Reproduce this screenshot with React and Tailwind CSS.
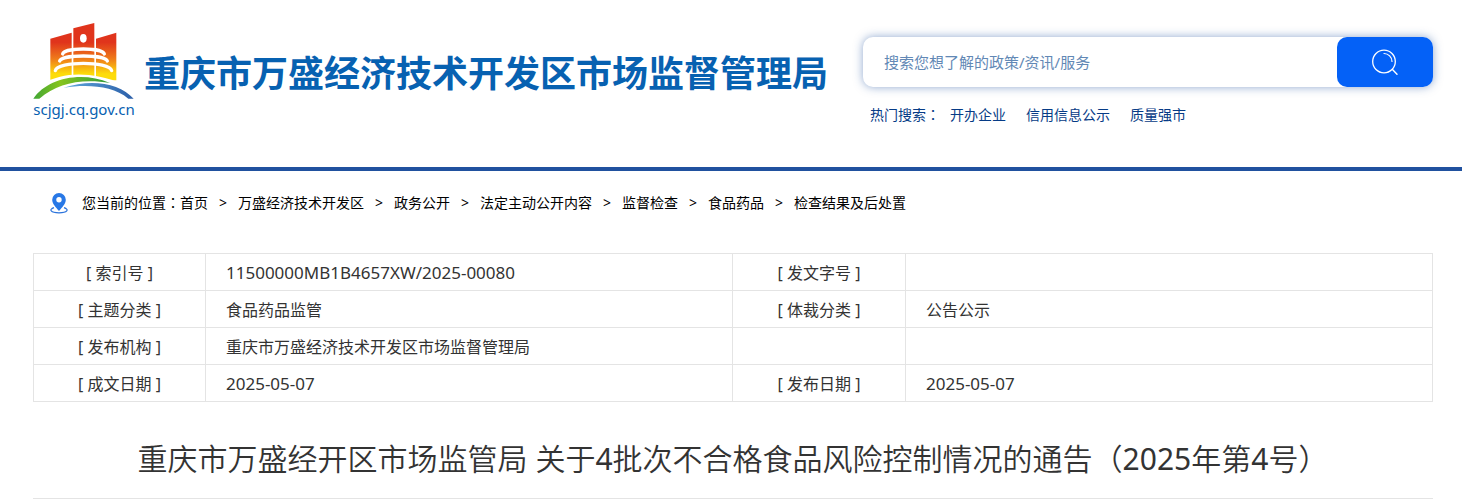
const HOT_WORDS = ['开办企业', '信用信息公示', '质量强市'];

const CRUMBS = ['首页', '万盛经济技术开发区', '政务公开', '法定主动公开内容', '监督检查', '食品药品', '检查结果及后处置'];

const ROWS = [
  ['[ 索引号 ]', '11500000MB1B4657XW/2025-00080', '[ 发文字号 ]', ''],
  ['[ 主题分类 ]', '食品药品监管', '[ 体裁分类 ]', '公告公示'],
  ['[ 发布机构 ]', '重庆市万盛经济技术开发区市场监督管理局', '', ''],
  ['[ 成文日期 ]', '2025-05-07', '[ 发布日期 ]', '2025-05-07'],
];

function LogoMark() {
  return (
    <svg viewBox="24 24 306 231" className="h-[77px] w-[102px]" aria-hidden="true">
      <defs>
        <linearGradient id="tower" x1="0" y1="24" x2="0" y2="190" gradientUnits="userSpaceOnUse">
          <stop offset="0.35" stopColor="#e0341c" />
          <stop offset="0.65" stopColor="#ef7c1a" />
          <stop offset="0.92" stopColor="#fddc0a" />
        </linearGradient>
        <linearGradient id="hill" x1="24" y1="0" x2="255" y2="0" gradientUnits="userSpaceOnUse">
          <stop offset="0" stopColor="#3fa535" />
          <stop offset="0.35" stopColor="#86c41e" />
          <stop offset="1" stopColor="#2f9a3c" />
        </linearGradient>
        <linearGradient id="river" x1="120" y1="0" x2="326" y2="0" gradientUnits="userSpaceOnUse">
          <stop offset="0" stopColor="#5fa8dc" />
          <stop offset="1" stopColor="#2b5ea8" />
        </linearGradient>
      </defs>
      <g fill="url(#tower)">
        <path d="M76 71 L140 53 V196 H76 Z" />
        <path d="M145 40 L208 24 V196 H145 Z" />
        <path d="M213 71 L274 53 V196 H213 Z" />
      </g>
      <ellipse cx="175" cy="70" rx="10" ry="13" fill="#fff" />
      <g fill="none" stroke="#fff" strokeWidth="10" strokeLinecap="round">
        <path d="M113 117 C118 97 232 97 238 117" />
        <path d="M104 138 C110 118 240 118 247 138" />
        <path d="M91 167 C98 138 252 138 260 167" />
      </g>
      {/* white band keeps the hill clear of the towers */}
      <path d="M60 204 C110 172 200 168 290 206 L290 226 L60 226 Z" fill="#fff" />
      <path d="M25 251 C65 192 165 166 255 204 C165 190 98 206 43 251 Z" fill="url(#hill)" />
      <path d="M116 218 C200 190 285 205 326 251 H310 C262 212 190 208 116 218 Z" fill="url(#river)" />
    </svg>
  );
}

function SearchIcon() {
  return (
    <svg viewBox="0 0 26 26" className="size-[26px]" fill="none" stroke="#fff" strokeLinecap="round" aria-hidden="true">
      <circle cx="12" cy="12.5" r="11.3" strokeWidth="1.3" />
      <path d="M12 4.5 a8 8 0 0 1 8 8" strokeWidth="1.2" />
      <path d="M20.5 20.5 L25 25.2" strokeWidth="1.4" />
    </svg>
  );
}

function PinIcon() {
  return (
    <svg viewBox="0 0 18 21" className="h-[21px] w-[18px]" aria-hidden="true">
      <path d="M4 14.6 C-1.6 16.6 0.6 19.8 9 19.8 C17.4 19.8 19.6 16.6 14 14.6" fill="none" stroke="#2b73dc" strokeWidth="1.2" />
      <path d="M9 0 a6.8 6.8 0 0 1 6.8 6.8 C15.8 11 12 14.5 9 18 C6 14.5 2.2 11 2.2 6.8 A6.8 6.8 0 0 1 9 0 Z" fill="#2878e6" />
      <circle cx="9" cy="6.7" r="2.7" fill="#fff" />
    </svg>
  );
}

// the TC cut centres the full-width colon in its box
function Colon() {
  return <span lang="zh-TW" className="font-['Noto_Sans_CJK_TC',sans-serif] leading-none">：</span>;
}

function Header() {
  return (
    <header className="border-b-4 border-[#20519f] pr-[29px] pl-[33px]">
      <div className="flex h-[167px] items-start justify-between">
        <a href="#" className="flex text-[#0761b1]">
          <span className="mt-[23px] flex w-[102px] flex-col">
            <LogoMark />
            <span className="text-center text-[15px] leading-[18px]">scjgj.cq.gov.cn</span>
          </span>
          <span className="mt-12 ml-[9px] text-4xl leading-[52px] font-bold whitespace-nowrap">
            重庆市万盛经济技术开发区市场监督管理局
          </span>
        </a>
        <div className="mt-[37px] w-[570px]">
          <form className="flex h-[50px] rounded-[10px] bg-white shadow-[0_0_10px_#20519f80]">
            <input
              type="text"
              aria-label="搜索"
              placeholder="搜索您想了解的政策/资讯/服务"
              className="min-w-0 flex-1 pl-[21px] text-[15px] outline-none placeholder:text-[#6288b5]"
            />
            <button type="button" aria-label="搜索" className="flex w-24 items-center justify-center rounded-[10px] bg-[#0461f7]">
              <SearchIcon />
            </button>
          </form>
          <p className="mt-[18px] flex pl-[7px] text-sm text-[#063b86]">
            <span className="w-20">热门搜索<Colon /></span>
            <span className="flex gap-5">
              {HOT_WORDS.map((w) => (
                <a key={w} href="#">{w}</a>
              ))}
            </span>
          </p>
        </div>
      </div>
    </header>
  );
}

function Breadcrumb() {
  return (
    <nav aria-label="当前位置" className="flex h-16 items-center pl-[17px] text-sm text-black">
      <PinIcon />
      <span className="ml-3.5">您当前的位置<Colon /></span>
      <ol className="flex">
        {CRUMBS.map((c, i) => (
          <li key={c} className="flex">
            {i > 0 && <span className="w-[30px] text-center">&gt;</span>}
            <a href="#">{c}</a>
          </li>
        ))}
      </ol>
    </nav>
  );
}

function InfoTable() {
  return (
    <table className="mt-[18px] w-full table-fixed border-collapse text-base text-[#333]">
      <colgroup>
        <col className="w-[172px]" />
        <col />
        <col className="w-[173px]" />
        <col />
      </colgroup>
      <tbody>
        {ROWS.map((row) => (
          <tr key={row[0]} className="h-[37px]">
            {row.map((cell, i) =>
              i % 2 === 0 ? (
                <th key={i} scope="row" className="border border-[#e4e4e4] pt-0.5 font-normal">{cell}</th>
              ) : (
                <td key={i} className={`border border-[#e4e4e4] pt-0.5 pl-5 ${/^\d/.test(cell) ? 'text-[17px]' : ''}`}>{cell}</td>
              )
            )}
          </tr>
        ))}
      </tbody>
    </table>
  );
}

export default function App() {
  return (
    <div lang="zh-CN" className="bg-white font-['Noto_Sans','Noto_Sans_CJK_SC',sans-serif]">
      <Header />
      <main className="pr-[29px] pl-[33px]">
        <Breadcrumb />
        <InfoTable />
        <h1 className="mt-[34px] border-b border-[#e4e4e4] pb-[17px] text-center text-3xl leading-[45px] font-[350] text-[#333]">
          重庆市万盛经开区市场监管局 关于<span className="font-normal">4</span>批次不合格食品风险控制情况的通告（<span className="font-normal">2025</span>年第<span className="font-normal">4</span>号）
        </h1>
      </main>
    </div>
  );
}
